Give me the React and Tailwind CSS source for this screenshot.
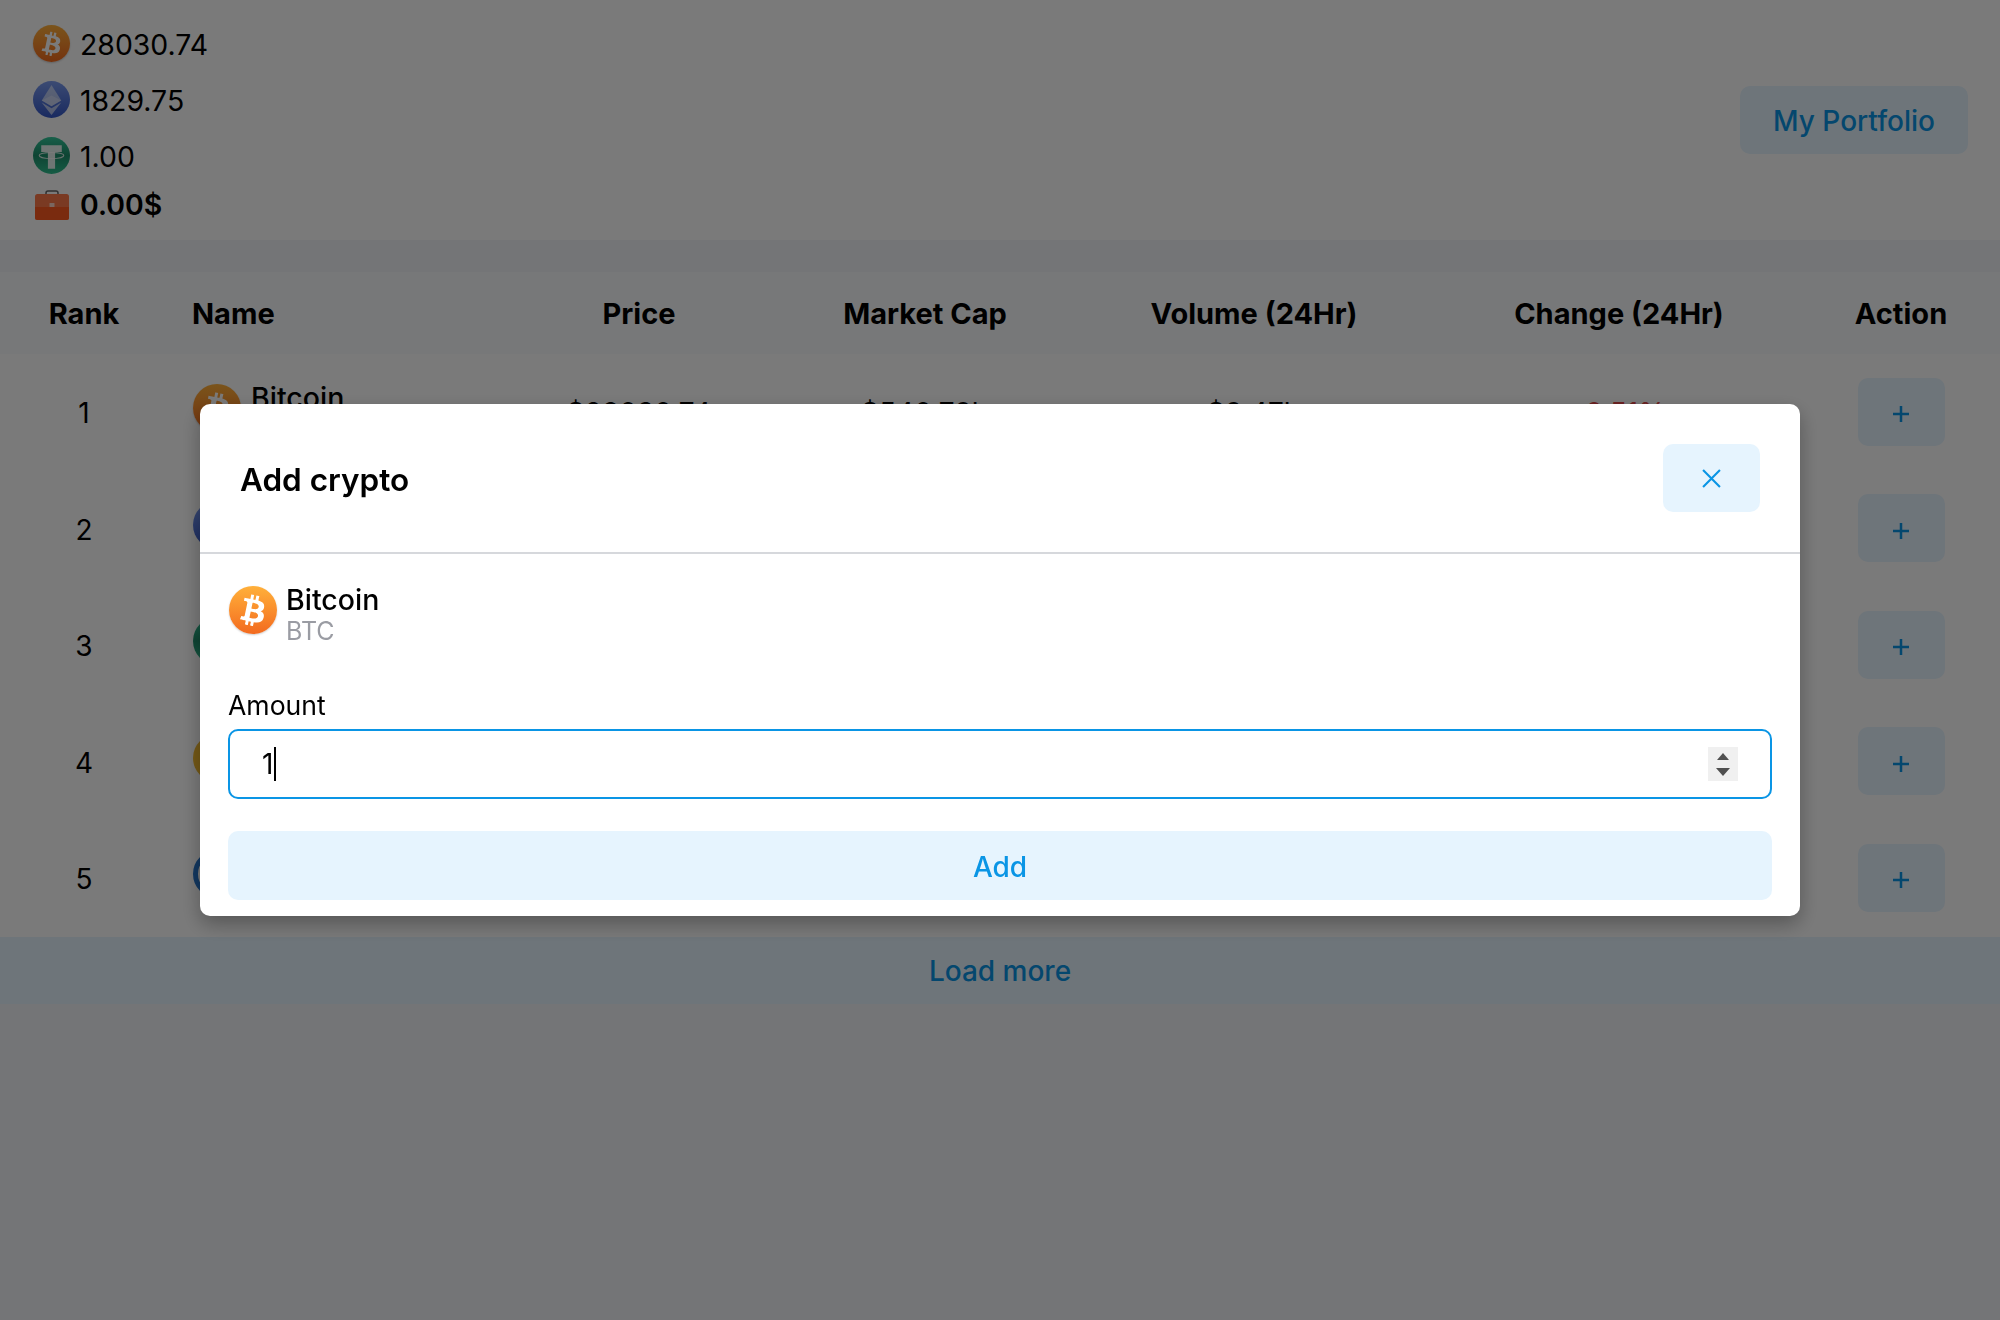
import React from "react";
import { FaBtc } from "react-icons/fa";

const coins = [
  { rank: 1, name: "Bitcoin", symbol: "BTC", price: "$28030.74", cap: "$540.79b", volume: "$9.47b", change: "-0.51%", icon: "btc" },
  { rank: 2, name: "Ethereum", symbol: "ETH", price: "$1829.75", cap: "$220.35b", volume: "$5.12b", change: "-0.34%", icon: "eth" },
  { rank: 3, name: "Tether", symbol: "USDT", price: "$1.00", cap: "$79.42b", volume: "$14.08b", change: "0.02%", icon: "usdt" },
  { rank: 4, name: "BNB", symbol: "BNB", price: "$311.20", cap: "$48.55b", volume: "$0.41b", change: "-0.18%", icon: "bnb" },
  { rank: 5, name: "USD Coin", symbol: "USDC", price: "$1.00", cap: "$29.63b", volume: "$1.76b", change: "0.01%", icon: "usdc" },
];

const rowGrid = "grid grid-cols-[168px_332px_278px_294px_364px_364px_200px] items-center text-center";

const BtcIcon = ({ large }) => (
  <div
    className={`flex shrink-0 items-center justify-center rounded-full bg-linear-to-b from-[#ffb03a] to-[#f26a1f] text-white shadow-[0_1px_2px_rgba(0,0,0,0.2)] ${
      large ? "w-[48px] h-[48px] text-[31px]" : "w-[37px] h-[37px] text-[24px]"
    }`}
  >
    <FaBtc className="rotate-[12deg]" />
  </div>
);

const EthIcon = ({ id, large }) => (
  <svg viewBox="0 0 36 36" className={`shrink-0 ${large ? "w-[48px] h-[48px]" : "w-[37px] h-[37px]"}`}>
    <defs>
      <linearGradient id={id} x1="0" y1="0" x2="0" y2="1">
        <stop offset="0" stopColor="#7c9cf0" />
        <stop offset="1" stopColor="#3558c8" />
      </linearGradient>
    </defs>
    <circle cx="18" cy="18" r="18" fill={`url(#${id})`} />
    <polygon points="18,4 8.5,19 18,24.5 27.5,19" fill="#fff" opacity="0.55" />
    <polygon points="18,14 8.5,19 18,24.5 27.5,19" fill="#fff" opacity="0.3" />
    <polygon points="8.5,21 18,33 27.5,21 18,26.5" fill="#fff" opacity="0.6" />
  </svg>
);

const UsdtIcon = ({ id, large }) => (
  <svg viewBox="0 0 36 36" className={`shrink-0 ${large ? "w-[48px] h-[48px]" : "w-[37px] h-[37px]"}`}>
    <defs>
      <linearGradient id={id} x1="0" y1="0" x2="0" y2="1">
        <stop offset="0" stopColor="#32c89a" />
        <stop offset="0.5" stopColor="#1e8f6c" />
        <stop offset="1" stopColor="#2fc090" />
      </linearGradient>
    </defs>
    <circle cx="18" cy="18" r="18" fill={`url(#${id})`} />
    <path d="M8 8h20v6.500h-6.500V31h-7V14.500H8z" fill="#fff" opacity="0.9" />
    <ellipse cx="18" cy="18" rx="12" ry="3" fill="none" stroke="#fff" strokeWidth="1" opacity="0.85" />
  </svg>
);

const BnbIcon = () => <div className="w-[48px] h-[48px] shrink-0 rounded-full bg-[#f3ba2f]" />;

const UsdcIcon = () => (
  <div className="w-[48px] h-[48px] shrink-0 rounded-full border-[5px] border-[#2775ca] bg-white" />
);

const Briefcase = () => (
  <svg viewBox="0 0 34 30" className="w-[34px] h-[30px] shrink-0">
    <path d="M11 6V3a2 2 0 0 1 2-2h8a2 2 0 0 1 2 2v3" fill="none" stroke="#666" strokeWidth="1.500" />
    <rect x="0" y="4" width="34" height="26" rx="2.500" fill="#ff7a4a" />
    <path d="M0 17h34v10.500a2.500 2.500 0 0 1-2.500 2.500h-29A2.500 2.500 0 0 1 0 27.500z" fill="#ff5a20" />
    <rect x="14.500" y="13" width="5" height="4" rx="0.500" fill="#ffd8c8" />
  </svg>
);

const CoinIcon = ({ type, suffix }) => {
  if (type === "btc") return <BtcIcon large />;
  if (type === "eth") return <EthIcon large id={`eth-${suffix}`} />;
  if (type === "usdt") return <UsdtIcon large id={`usdt-${suffix}`} />;
  if (type === "bnb") return <BnbIcon />;
  return <UsdcIcon />;
};

const PriceLine = ({ children, icon, bold }) => (
  <div className={`flex items-center text-[28.400px] leading-[36px] ${bold ? "gap-[11px] font-semibold" : "gap-[10px]"}`}>
    {icon}
    <span className={bold ? "pt-[1px]" : "pt-[3px]"}>{children}</span>
  </div>
);

const PageHeader = () => (
  <header className="h-[240px] bg-white flex items-center justify-between pl-[33px] pr-[32px]">
    <div className="flex flex-col self-start pt-[24px]">
      <div className="h-[56px]">
        <PriceLine icon={<BtcIcon />}>28030.74</PriceLine>
      </div>
      <div className="h-[56px]">
        <PriceLine icon={<EthIcon id="eth-top" />}>1829.75</PriceLine>
      </div>
      <div className="h-[50px]">
        <PriceLine icon={<UsdtIcon id="usdt-top" />}>1.00</PriceLine>
      </div>
      <div className="pl-[2px]">
        <PriceLine bold icon={<Briefcase />}>
          0.00$
        </PriceLine>
      </div>
    </div>
    <button className="w-[228px] h-[68px] pt-[2px] rounded-[10px] bg-[#e6f4fe] text-[#0a95e5] text-[28px] font-medium">
      My Portfolio
    </button>
  </header>
);

const CoinTable = () => (
  <section className="mt-[32px]">
    <div className={`${rowGrid} h-[82px] pt-[2px] bg-[#f9fafc] text-[29px] font-bold`}>
      <div>Rank</div>
      <div className="text-left pl-[24px]">Name</div>
      <div>Price</div>
      <div>Market Cap</div>
      <div>Volume (24Hr)</div>
      <div className="pl-[2px]">Change (24Hr)</div>
      <div className="pl-[2px]">Action</div>
    </div>
    <div className="bg-white">
      {coins.map((coin) => (
        <div key={coin.rank} className={`${rowGrid} h-[116.5px] pt-[2px] text-[28px]`}>
          <div>{coin.rank}</div>
          <div className="flex items-center gap-[10px] pl-[25px] text-left">
            <div className="mb-[10px]">
              <CoinIcon type={coin.icon} suffix={coin.rank} />
            </div>
            <div>
              <div className="text-[28.500px] font-medium leading-[32px]">{coin.name}</div>
              <div className="text-[24px] leading-[30px] text-[#9a9ca3]">{coin.symbol}</div>
            </div>
          </div>
          <div>{coin.price}</div>
          <div>{coin.cap}</div>
          <div>{coin.volume}</div>
          <div className={`pl-[2px] ${coin.change.startsWith("-") ? "text-[#e04848]" : "text-[#38a169]"}`}>{coin.change}</div>
          <div className="flex justify-center pl-[2px] -mt-[3px]">
            <button className="flex items-center justify-center w-[87px] h-[68px] rounded-[10px] bg-[#e6f4fe] text-[#0a95e5]">
              <svg viewBox="0 0 16 16" className="w-[16px] h-[16px] mt-[5px]">
                <path d="M8 0v16M0 8h16" stroke="currentColor" strokeWidth="2.500" />
              </svg>
            </button>
          </div>
        </div>
      ))}
    </div>
    <button className="block w-full h-[67px] pt-[2px] bg-[#e6f4fe] text-[#0a95e5] text-[28px] font-medium">Load more</button>
  </section>
);

const AddCryptoModal = () => (
  <div className="fixed inset-0 z-10 bg-black/[0.52] pt-[404px]">
    <div className="mx-auto w-[1600px] h-[512px] rounded-[10px] bg-white shadow-[0_8px_20px_rgba(0,0,0,0.3)]">
      {/* Header */}
      <div className="flex items-center justify-between h-[150px] border-b-2 border-[#d6d8dc] pl-[40px] pr-[40px]">
        <h2 className="pt-[4px] text-[31.500px] font-semibold">Add crypto</h2>
        <button className="flex items-center justify-center w-[97px] h-[68px] rounded-[10px] bg-[#e6f4fe] text-[#0a95e5]">
          <svg viewBox="0 0 18 18" className="w-[19px] h-[19px]">
            <path d="M1 1l16 16M17 1L1 17" stroke="currentColor" strokeWidth="2" />
          </svg>
        </button>
      </div>

      {/* Body */}
      <div className="px-[28px] pt-[30px]">
        <div className="flex gap-[9px] pl-[1px]">
          <div className="mt-[2px]">
            <BtcIcon large />
          </div>
          <div>
            <div className="text-[28.500px] leading-[32px] font-medium">Bitcoin</div>
            <div className="text-[25px] leading-[30px] text-[#9a9ca3]">BTC</div>
          </div>
        </div>

        <label className="block mt-[43px] mb-[8px] text-[26.600px] leading-[32px]">Amount</label>
        <div className="relative h-[70px]">
          <input
            readOnly
            value="1"
            className="w-full h-full rounded-[10px] border-2 border-[#0a95e5] pl-[32px] text-[28px] outline-none"
          />
          <span className="absolute left-[46px] top-[18px] w-[2px] h-[34px] bg-black" />
          <div className="absolute right-[34px] top-[18px] flex flex-col items-center justify-center gap-[8px] w-[30px] h-[34px] bg-[#f0f0f0]">
            <svg viewBox="0 0 12 7" className="w-[12px] h-[7px]">
              <polygon points="6,0 12,7 0,7" fill="#505050" />
            </svg>
            <svg viewBox="0 0 14 8" className="w-[14px] h-[8px]">
              <polygon points="0,0 14,0 7,8" fill="#505050" />
            </svg>
          </div>
        </div>

        <button className="block w-full h-[69px] pt-[2px] mt-[32px] rounded-[10px] bg-[#e6f4fe] text-[#0a95e5] text-[28px] font-medium">
          Add
        </button>
      </div>
    </div>
  </div>
);

export default function App() {
  return (
    <div className="min-h-screen bg-[#f3f4f8] text-black font-['Inter',sans-serif]">
      <PageHeader />
      <CoinTable />
      <AddCryptoModal />
    </div>
  );
}
